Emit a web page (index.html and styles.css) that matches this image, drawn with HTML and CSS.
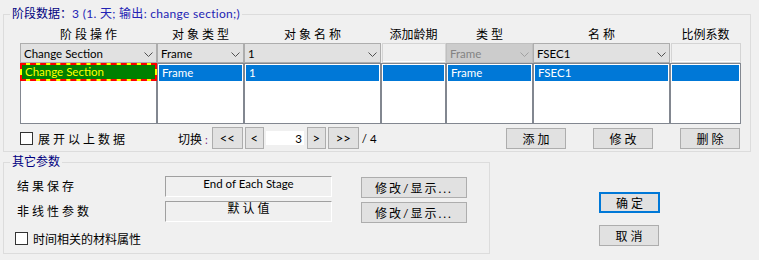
FILE: index.html
```html
<!DOCTYPE html>
<html lang="zh-CN">
<head>
    <meta charset="UTF-8">
    <title>施工阶段</title>
    <link rel="stylesheet" href="styles.css">
</head>
<body>
    <div class="dialog">
        <!-- 阶段数据 -->
        <fieldset class="group stage-group">
            <legend class="group-title">阶段数据：<span class="title-info">3 (1. 天; 输出: change section;)</span></legend>

            <div class="columns">
                <div class="column">
                    <div class="col-head spaced">阶段操作</div>
                    <div class="combo"><span>Change Section</span><svg class="chevron" width="9" height="5" viewBox="0 0 9 5"><path d="M0.5 0.5 L4.5 4.5 L8.5 0.5"/></svg></div>
                    <div class="listbox">
                        <div class="row row-current">Change Section</div>
                    </div>
                </div>
                <div class="column">
                    <div class="col-head spaced">对象类型</div>
                    <div class="combo"><span>Frame</span><svg class="chevron" width="9" height="5" viewBox="0 0 9 5"><path d="M0.5 0.5 L4.5 4.5 L8.5 0.5"/></svg></div>
                    <div class="listbox">
                        <div class="row">Frame</div>
                    </div>
                </div>
                <div class="column">
                    <div class="col-head spaced">对象名称</div>
                    <div class="combo"><span>1</span><svg class="chevron" width="9" height="5" viewBox="0 0 9 5"><path d="M0.5 0.5 L4.5 4.5 L8.5 0.5"/></svg></div>
                    <div class="listbox">
                        <div class="row">1</div>
                    </div>
                </div>
                <div class="column">
                    <div class="col-head">添加龄期</div>
                    <div class="edit-box"></div>
                    <div class="listbox">
                        <div class="row"></div>
                    </div>
                </div>
                <div class="column">
                    <div class="col-head spaced">类型</div>
                    <div class="combo disabled"><span>Frame</span><svg class="chevron" width="9" height="5" viewBox="0 0 9 5"><path d="M0.5 0.5 L4.5 4.5 L8.5 0.5"/></svg></div>
                    <div class="listbox">
                        <div class="row">Frame</div>
                    </div>
                </div>
                <div class="column">
                    <div class="col-head spaced">名称</div>
                    <div class="combo"><span>FSEC1</span><svg class="chevron" width="9" height="5" viewBox="0 0 9 5"><path d="M0.5 0.5 L4.5 4.5 L8.5 0.5"/></svg></div>
                    <div class="listbox">
                        <div class="row">FSEC1</div>
                    </div>
                </div>
                <div class="column">
                    <div class="col-head">比例系数</div>
                    <div class="edit-box"></div>
                    <div class="listbox">
                        <div class="row"></div>
                    </div>
                </div>
            </div>

            <div class="toolbar">
                <label class="check">
                    <span class="check-box"></span>
                    <span class="spaced">展开以上数据</span>
                </label>

                <div class="pager">
                    <span class="pager-label">切换<span class="colon">:</span></span>
                    <button class="btn pager-btn wide">&lt;&lt;</button>
                    <button class="btn pager-btn">&lt;</button>
                    <input class="page-input" type="text" value="3">
                    <button class="btn pager-btn">&gt;</button>
                    <button class="btn pager-btn wide">&gt;&gt;</button>
                    <span class="page-total">/ 4</span>
                </div>

                <div class="actions">
                    <button class="btn action spaced">添加</button>
                    <button class="btn action spaced">修改</button>
                    <button class="btn action spaced">删除</button>
                </div>
            </div>
        </fieldset>

        <div class="lower">
            <!-- 其它参数 -->
            <fieldset class="group other-group">
                <legend class="group-title">其它参数</legend>

                <div class="params">
                    <span class="param-label spaced">结果保存</span>
                    <div class="field latin">End of Each Stage</div>
                    <button class="btn param-btn">修改/显示...</button>

                    <span class="param-label spaced">非线性参数</span>
                    <div class="field spaced">默认值</div>
                    <button class="btn param-btn">修改/显示...</button>
                </div>

                <label class="check time-check">
                    <span class="check-box"></span>
                    <span>时间相关的材料属性</span>
                </label>
            </fieldset>

            <div class="dialog-buttons">
                <button class="btn dialog-btn default spaced">确定</button>
                <button class="btn dialog-btn spaced">取消</button>
            </div>
        </div>
    </div>
</body>
</html>
```

FILE: styles.css
```css
* {
    margin: 0;
    padding: 0;
    box-sizing: border-box;
}

body {
    background: #f0f0f0;
    font-family: Lato, "Noto Sans CJK SC", sans-serif;
    font-size: 12px;
    color: #000;
}

.dialog {
    width: 759px;
    height: 260px;
    padding: 6px 0 0 3px;
}

.spaced {
    letter-spacing: 3px;
}

/* group boxes */
.group {
    border: 1px solid #dcdcdc;
    min-width: 0;
}

.group-title {
    padding: 0 2px;
    line-height: 16px;
    font-size: 12px;
    color: #000080;
}

.title-info {
    color: #2323b4;
    letter-spacing: 0.3px;
}

.stage-group {
    width: 748px;
    height: 146px;
    padding: 5px 9px 2px 16px;
}

.stage-group .group-title {
    margin-left: -10px;
}

/* columns of the stage table */
.columns {
    display: grid;
    grid-template-columns: 137px 87px 137px 65px 87px 137px 71px;
}

.column {
    display: flex;
    flex-direction: column;
}

.col-head {
    height: 16px;
    line-height: 16px;
    text-align: center;
}

.col-head.spaced {
    padding-left: 3px;
}

.combo {
    height: 20px;
    display: flex;
    align-items: center;
    justify-content: space-between;
    padding: 0 3px 0 3px;
    background: #e1e1e1;
    border: 1px solid #adadad;
    font-size: 11.5px;
}

.combo.disabled {
    background: #cccccc;
    border-color: #bfbfbf;
    color: #838383;
}

.chevron {
    margin-top: 2px;
    fill: none;
    stroke: #505050;
    stroke-width: 1;
}

.combo.disabled .chevron {
    stroke: #a0a0a0;
}

.edit-box {
    height: 20px;
    margin-left: 1px;
    background: #f0f0f0;
    border: 1px solid #d4d4d4;
    box-shadow: inset 0 -1px 0 #fff;
}

.listbox {
    height: 61px;
    padding: 1px;
    background: #fff;
    border: 1px solid #828790;
}

.row {
    height: 16px;
    line-height: 15px;
    padding-left: 3px;
    background: #0078d7;
    color: #fff;
    font-size: 11.5px;
    white-space: nowrap;
}

.row-current {
    height: 18px;
    margin: -2px -2px 0 -2px;
    padding-left: 3px;
    line-height: 14px;
    background: #ffff00;
    border: 2px dashed #ff0000;
    box-shadow: inset 0 0 0 20px #008000;
    color: #ffff00;
}

/* toolbar below the table */
.toolbar {
    height: 22px;
    margin-top: 3px;
    display: flex;
    align-items: center;
}

.check {
    display: flex;
    align-items: center;
    gap: 5px;
}

.check-box {
    width: 13px;
    height: 13px;
    background: #fff;
    border: 1px solid #333;
}

.pager {
    margin-left: 50px;
    display: flex;
    align-items: center;
    gap: 2px;
}

.pager-label {
    margin-right: 2px;
}

.colon {
    margin-left: 3px;
    color: #7a2a7a;
    font-size: 11px;
}

.btn {
    background: #e1e1e1;
    border: 1px solid #adadad;
    font-family: Lato, "Noto Sans CJK SC", sans-serif;
    font-size: 12px;
    color: #000;
}

.btn.spaced {
    padding-left: 3px;
}

.pager-btn {
    width: 19px;
    height: 22px;
    font-size: 13px;
}

.pager-btn.wide {
    width: 31px;
}

.page-input {
    width: 38px;
    height: 14px;
    margin-right: 1px;
    border: none;
    background: #fff;
    text-align: right;
    padding-right: 2px;
    font-family: Lato, sans-serif;
    font-size: 11.5px;
    outline: none;
}

.page-total {
    margin-left: 1px;
    font-size: 11.5px;
}

.actions {
    margin-left: auto;
    margin-right: 1px;
    display: flex;
    gap: 27px;
}

.action {
    width: 60px;
    height: 21px;
}

/* lower part */
.lower {
    margin-top: 2px;
    display: flex;
    align-items: flex-start;
}

.other-group {
    width: 487px;
    height: 100px;
    padding: 6px 0 4px 11px;
}

.other-group .group-title {
    margin-left: -5px;
}

.params {
    margin-left: 2px;
    display: grid;
    grid-template-columns: 148px 167px 135px;
    grid-auto-rows: 21px;
    row-gap: 4px;
    align-items: center;
}

.param-label {
    line-height: 16px;
}

.field {
    height: 21px;
    line-height: 14px;
    text-align: center;
    background: #f0f0f0;
    border-top: 1px solid #a0a0a0;
    border-left: 1px solid #a0a0a0;
    border-bottom: 1px solid #fff;
    border-right: 1px solid #fff;
}

.field.latin {
    font-size: 11.5px;
}

.field.spaced {
    padding-left: 3px;
}

.param-btn {
    width: 106px;
    height: 21px;
    margin-left: 29px;
    margin-top: 2px;
    letter-spacing: 2px;
}

.time-check {
    height: 21px;
    margin-top: 6px;
}

.dialog-buttons {
    margin-left: 109px;
    padding-top: 38px;
    display: flex;
    flex-direction: column;
    gap: 12px;
}

.dialog-btn {
    width: 60px;
    height: 21px;
}

.dialog-btn.default {
    width: 61px;
    border: 2px solid #0078d7;
}
```
